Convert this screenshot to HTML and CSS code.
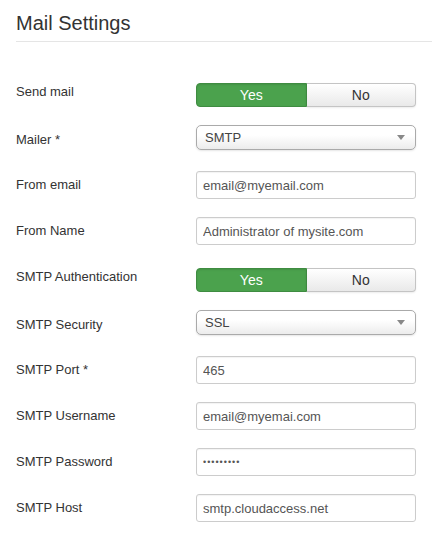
FILE: index.html
```html
<!DOCTYPE html>
<html>

<head>
  <meta charset="utf-8">
  <meta name="viewport" content="width=device-width">
  <title>Mail Settings</title>
  <link rel="stylesheet" href="styles.css">
</head>

<body>
  <h2 class="page-title">Mail Settings</h2>

  <form class="settings">
    <div class="row row-toggle">
      <label>Send mail</label>
      <div class="toggle">
        <span class="toggle-btn active">Yes</span>
        <span class="toggle-btn">No</span>
      </div>
    </div>

    <div class="row row-select">
      <label>Mailer *</label>
      <div class="select"><span>SMTP</span><i class="caret"></i></div>
    </div>

    <div class="row">
      <label>From email</label>
      <input class="field" type="text" value="email@myemail.com">
    </div>

    <div class="row">
      <label>From Name</label>
      <input class="field" type="text" value="Administrator of mysite.com">
    </div>

    <div class="row row-toggle row-auth">
      <label>SMTP Authentication</label>
      <div class="toggle">
        <span class="toggle-btn active">Yes</span>
        <span class="toggle-btn">No</span>
      </div>
    </div>

    <div class="row row-select">
      <label>SMTP Security</label>
      <div class="select"><span>SSL</span><i class="caret"></i></div>
    </div>

    <div class="row">
      <label>SMTP Port *</label>
      <input class="field" type="text" value="465">
    </div>

    <div class="row">
      <label>SMTP Username</label>
      <input class="field" type="text" value="email@myemai.com">
    </div>

    <div class="row">
      <label>SMTP Password</label>
      <input class="field" type="password" value="password1">
    </div>

    <div class="row">
      <label>SMTP Host</label>
      <input class="field" type="text" value="smtp.cloudaccess.net">
    </div>
  </form>
</body>

</html>
```

FILE: styles.css
```css
body {
  font-family: "Liberation Sans", Arial, sans-serif;
  font-size: 13px;
  color: #333;
  background-color: #ffffff;
  margin: 0;
  padding-left: 16px;
}

.page-title {
  font-size: 20px;
  font-weight: normal;
  line-height: 24px;
  margin: 11px 0 0;
  padding-bottom: 6px;
  border-bottom: 1px solid #e5e5e5;
}

.settings {
  margin-top: 41px;
}

.row {
  display: flex;
  align-items: flex-start;
  margin-bottom: 18px;
}

.row label {
  width: 180px;
  line-height: 18px;
  padding-top: 5px;
}

.row-toggle label {
  padding-top: 0;
}

.row-select {
  margin-bottom: 21px;
}

.row-select label {
  padding-top: 6px;
}

/* extra space above the second switch */
.row-auth {
  padding-top: 5px;
}

/* Yes / No buttons */
.toggle {
  display: flex;
  width: 220px;
  height: 24px;
  box-sizing: border-box;
}

.toggle-btn {
  flex: 1;
  text-align: center;
  line-height: 22px;
  font-size: 14px;
  color: #333;
  border: 1px solid #c4c4c4;
  background: linear-gradient(#ffffff, #e9e9e9);
  box-shadow: 0 1px 2px rgba(0, 0, 0, 0.08);
}

.toggle-btn:first-child {
  border-radius: 4px 0 0 4px;
}

.toggle-btn:last-child {
  border-left: none;
  border-radius: 0 4px 4px 0;
}

.toggle-btn.active {
  color: #ffffff;
  background: #4ba24d;
  border-color: #3f8c41;
  box-shadow: inset 0 1px 2px rgba(0, 0, 0, 0.1);
}

/* dropdowns */
.select {
  display: flex;
  align-items: center;
  justify-content: space-between;
  width: 220px;
  height: 25px;
  box-sizing: border-box;
  padding: 0 10px 0 8px;
  border: 1px solid #aaa;
  border-radius: 5px;
  background: linear-gradient(#ffffff 40%, #ececec);
  box-shadow: 0 1px 2px rgba(0, 0, 0, 0.1);
  color: #444;
}

.caret {
  width: 0;
  height: 0;
  border-left: 4px solid transparent;
  border-right: 4px solid transparent;
  border-top: 5px solid #888;
}

/* text inputs */
.field {
  width: 220px;
  height: 28px;
  box-sizing: border-box;
  padding: 4px 6px;
  border: 1px solid #ccc;
  border-radius: 3px;
  font-family: "Liberation Sans", Arial, sans-serif;
  font-size: 13px;
  color: #555;
  box-shadow: inset 0 1px 1px rgba(0, 0, 0, 0.05);
}

.field[type="password"] {
  font-size: 9px;
  letter-spacing: 1px;
}
```
